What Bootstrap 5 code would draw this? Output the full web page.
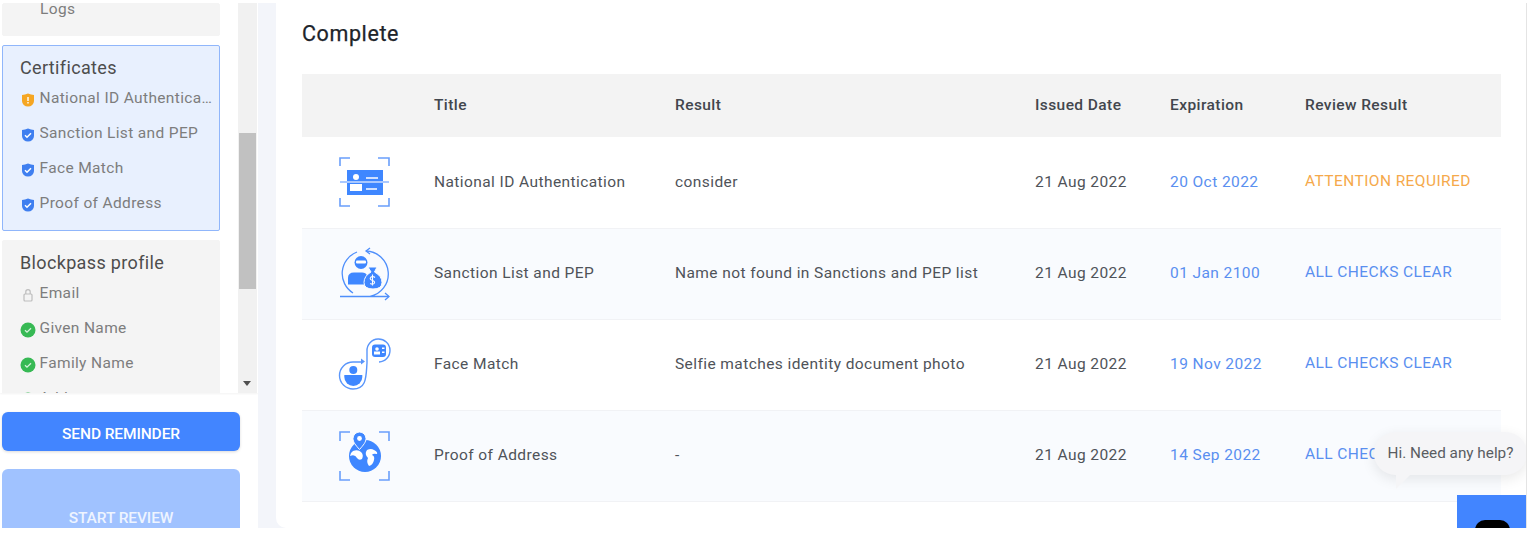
<!DOCTYPE html>
<html lang="en">
<head>
    <meta charset="UTF-8">
    <meta name="viewport" content="width=device-width, initial-scale=1.0">
    <title>Certificates</title>
    <link href="https://cdn.jsdelivr.net/npm/bootstrap@5.3.3/dist/css/bootstrap.min.css" rel="stylesheet">
    <style>
    body { background: #fff; font-family: Roboto, "Liberation Sans", sans-serif; overflow: hidden; height: 544px; }
    .page-wrap { height: 525px; margin-top: 3px; width: 1527px; overflow: hidden; position: relative; border-right: 1px solid #e4e4e4; }

    /* SIDEBAR */
    .side-col { width: 258px; flex: none; }
    .side-top { height: 390px; overflow: hidden; box-shadow: 0 1px 2px rgba(0,0,0,.05); }
    .side-panels { width: 218px; margin-left: 2px; flex: none; }
    .check-panel { background: #f4f4f4; border-radius: 2px; padding: 0 4px 0 17px; margin-bottom: 9px; border: 1px solid #f4f4f4; }
    .check-panel.active-panel { background: #e8f0fe; border-color: #90b6fb; padding-top: 8px; height: 186px; }
    .check-panel.panel-logs { height: 33px; padding-left: 37px; color: #7d7d7d; font-size: 15.5px; letter-spacing: .35px; line-height: 11px; }
    .panel-profile { padding-top: 8px; height: 170px; margin-bottom: 0; }
    .panel-name { font-size: 18px; color: #4d4d4d; letter-spacing: .35px; line-height: 28px; margin-bottom: 6px; }
    .check-row { height: 35px; font-size: 15.5px; color: #7d7d7d; letter-spacing: .35px; line-height: 20px; gap: 3.5px; white-space: nowrap; }
    .check-row span { overflow: hidden; text-overflow: ellipsis; }
    .check-row svg { flex: none; margin-top: 3.5px; }
    .fake-scroll { width: 19px; margin-left: 18px; background: #f1f1f1; position: relative; flex: none; }
    .fake-thumb { position: absolute; top: 130px; left: 1px; right: 1px; height: 156px; background: #c1c1c1; }
    .fake-arrow { position: absolute; left: 5px; bottom: 7px; border: 4px solid transparent; border-top: 5px solid #505050; border-bottom: 0; }
    .side-btn { display: block; width: 238px; margin-left: 2px; background: #4285ff; color: #fff; border: 0; border-radius: 6px; font-size: 15.5px; font-weight: 500; letter-spacing: -.1px; box-shadow: 0 1px 3px rgba(0,0,0,.15); }
    .btn-remind { height: 39px; margin-top: 19px; padding-top: 7px; }
    .btn-review { height: 70px; margin-top: 18px; background: #a0c2ff; color: #eef4ff; padding-top: 31px; box-shadow: none; }

    /* MAIN */
    .main-bg { background: #f3f5fa; padding-left: 18px; flex: 1; }
    .main-card { background: #fff; height: 100%; border-bottom-left-radius: 10px; padding: 17px 26px 0 26px; }
    .main-title { font-size: 21.5px; font-weight: 400; color: #20242a; letter-spacing: .6px; line-height: 28px; margin-bottom: 26px; -webkit-text-stroke: .25px #20242a; }
    .cert-table { table-layout: fixed; width: 1199px; margin: 0; }
    .cert-table th { background: #f3f3f3; height: 63px; font-size: 15.5px; font-weight: 500; color: #42464d; letter-spacing: .42px; vertical-align: middle; padding: 0; border: 0; }
    .cert-table td { height: 91px; font-size: 15.5px; color: #4f5359; letter-spacing: .42px; vertical-align: middle; padding: 0; border: 0; border-bottom: 1px solid #f1f2f5; background: #fff; }
    .cert-table tr.alt-row td { background: #f9fbfe; }
    .cert-table td.icon-cell { padding: 2px 0 0 34px; }
    .icon-cell svg { display: block; }
    .date-blue { color: #5a8ff0 !important; }
    .res-warn { color: #f5a94b !important; padding-bottom: 1px !important; }
    .res-ok { color: #5a8ff0 !important; padding-bottom: 1px !important; }

    /* CHAT */
    .chat-bubble { position: absolute; left: 1374px; top: 429px; width: 153px; height: 43px; background: #f5f5f7; border-radius: 22px; color: #5a5d62; font-size: 15.3px; line-height: 43px; text-align: center; box-shadow: 0 4px 14px rgba(0,0,0,.09); white-space: nowrap; }
    .chat-tail { position: absolute; left: 22px; top: 43px; border-style: solid; border-width: 14px 14px 0 0; border-color: #f5f5f7 transparent transparent transparent; }
    .chat-launcher { position: absolute; left: 1457px; top: 492px; width: 70px; height: 33px; background: #4285ff; overflow: hidden; }
    .chat-launcher i { display: block; width: 35px; height: 30px; background: #000; border-radius: 10px; margin: 25px 0 0 18px; }
    </style>
</head>
<body>
    <div class="page-wrap d-flex">
        <!-- SIDEBAR -->
        <div class="side-col">
            <div class="side-top d-flex">
                <div class="side-panels">
                    <div class="check-panel panel-logs">Logs</div>

                    <div class="check-panel active-panel">
                        <div class="panel-name">Certificates</div>
                        <div class="check-row d-flex">
                            <svg width="16" height="16" viewBox="0 0 16 16"><path d="M8 1.500C10 2.500 12 2.500 14 3V9A6 5.500 0 0 1 2 9V3C4 2.500 6 2.500 8 1.500z" fill="#f5a623"/><rect x="7.300" y="5" width="1.400" height="4" fill="#fff"/><rect x="7.300" y="10" width="1.400" height="1.500" fill="#fff"/></svg>
                            <span>National ID Authentication</span>
                        </div>
                        <div class="check-row d-flex">
                            <svg width="16" height="16" viewBox="0 0 16 16"><path d="M8 1.500C10 2.500 12 2.500 14 3V9A6 5.500 0 0 1 2 9V3C4 2.500 6 2.500 8 1.500z" fill="#3f7ff0"/><path d="M5 8.200l2 2 4-4" fill="none" stroke="#fff" stroke-width="1.500"/></svg>
                            <span>Sanction List and PEP</span>
                        </div>
                        <div class="check-row d-flex">
                            <svg width="16" height="16" viewBox="0 0 16 16"><path d="M8 1.500C10 2.500 12 2.500 14 3V9A6 5.500 0 0 1 2 9V3C4 2.500 6 2.500 8 1.500z" fill="#3f7ff0"/><path d="M5 8.200l2 2 4-4" fill="none" stroke="#fff" stroke-width="1.500"/></svg>
                            <span>Face Match</span>
                        </div>
                        <div class="check-row d-flex">
                            <svg width="16" height="16" viewBox="0 0 16 16"><path d="M8 1.500C10 2.500 12 2.500 14 3V9A6 5.500 0 0 1 2 9V3C4 2.500 6 2.500 8 1.500z" fill="#3f7ff0"/><path d="M5 8.200l2 2 4-4" fill="none" stroke="#fff" stroke-width="1.500"/></svg>
                            <span>Proof of Address</span>
                        </div>
                    </div>

                    <div class="check-panel panel-profile">
                        <div class="panel-name">Blockpass profile</div>
                        <div class="check-row d-flex">
                            <svg width="16" height="16" viewBox="0 0 16 16"><rect x="4" y="7" width="8" height="7" rx="1" fill="none" stroke="#bdbdbd" stroke-width="1.2"/><path d="M5.800 7V4.800a2.200 2.200 0 0 1 4.400 0V7" fill="none" stroke="#bdbdbd" stroke-width="1.2"/></svg>
                            <span>Email</span>
                        </div>
                        <div class="check-row d-flex">
                            <svg width="16" height="16" viewBox="0 0 16 16"><circle cx="8" cy="8" r="7.500" fill="#37b954"/><path d="M5 8.200l2 2 4-4" fill="none" stroke="#d5f2db" stroke-width="1.300"/></svg>
                            <span>Given Name</span>
                        </div>
                        <div class="check-row d-flex">
                            <svg width="16" height="16" viewBox="0 0 16 16"><circle cx="8" cy="8" r="7.500" fill="#37b954"/><path d="M5 8.200l2 2 4-4" fill="none" stroke="#d5f2db" stroke-width="1.300"/></svg>
                            <span>Family Name</span>
                        </div>
                        <div class="check-row d-flex">
                            <svg width="16" height="16" viewBox="0 0 16 16"><circle cx="8" cy="8" r="7.500" fill="#37b954"/></svg>
                            <span>Address</span>
                        </div>
                    </div>
                </div>
                <div class="fake-scroll">
                    <div class="fake-thumb"></div>
                    <div class="fake-arrow"></div>
                </div>
            </div>
            <button class="side-btn btn-remind" type="button">SEND REMINDER</button>
            <button class="side-btn btn-review" type="button">START REVIEW</button>
        </div>

        <!-- MAIN -->
        <div class="main-bg">
            <div class="main-card">
                <div class="main-title">Complete</div>
                <table class="table cert-table">
                    <colgroup>
                        <col style="width:132px"><col style="width:241px"><col style="width:360px"><col style="width:135px"><col style="width:135px"><col style="width:196px">
                    </colgroup>
                    <thead>
                        <tr><th></th><th>Title</th><th>Result</th><th>Issued Date</th><th>Expiration</th><th>Review Result</th></tr>
                    </thead>
                    <tbody>
                        <tr>
                            <td class="icon-cell">
                                <svg width="56" height="56" viewBox="0 0 56 56" fill="none">
                                    <path d="M4 11V3h10M42 3h11v8M4 43v8h10M42 51h11v-8" stroke="#6a9ffb" stroke-width="1.600"/>
                                    <rect x="11" y="15" width="36" height="25" fill="#3f87ff"/>
                                    <circle cx="20" cy="22" r="3" fill="#fff"/>
                                    <rect x="14" y="29" width="12" height="7" fill="#fff"/>
                                    <rect x="30" y="22" width="12" height="2" fill="#cfe0ff"/>
                                    <rect x="30" y="33" width="11" height="2" fill="#cfe0ff"/>
                                    <rect x="4" y="26" width="49" height="2" fill="#a9c8ff"/>
                                </svg>
                            </td>
                            <td>National ID Authentication</td><td>consider</td><td>21 Aug 2022</td><td class="date-blue">20 Oct 2022</td><td class="res-warn">ATTENTION REQUIRED</td>
                        </tr>
                        <tr class="alt-row">
                            <td class="icon-cell">
                                <svg width="56" height="56" viewBox="0 0 56 56" fill="none">
                                    <path d="M21 5A23 23 0 0 0 17 46" stroke="#4f8ffb" stroke-width="1.300"/>
                                    <path d="M30 4A23 23 0 0 1 34 49.500H4H53" stroke="#4f8ffb" stroke-width="1.300"/>
                                    <path d="M34 1l-4 3 4 3M49 46l4 3.500-4 3.500" stroke="#4f8ffb" stroke-width="1.300"/>
                                    <circle cx="25" cy="15.500" r="6.500" fill="#3f87ff"/>
                                    <rect x="20" y="13.500" width="10" height="3" rx="1" fill="#fff"/>
                                    <path d="M12 37.500V31q0-5.500 6-5.500h8q4 0 5 3l-2 9z" fill="#3f87ff"/>
                                    <path d="M32 20h9l-2.500 5q7.500 4 7.500 10.500 0 6.500-9 6.500-9 0-9-6.500 0-6.500 7-10.500z" fill="#3f87ff" stroke="#f9fbfe"/>
                                    <path d="M39 30.500q-2-1.800-4-.5-1.800 2 .5 3 3.500 1 3 3-1.500 2-4.300.5M36.500 27.500v11" stroke="#fff" stroke-width="1.100"/>
                                </svg>
                            </td>
                            <td>Sanction List and PEP</td><td>Name not found in Sanctions and PEP list</td><td>21 Aug 2022</td><td class="date-blue">01 Jan 2100</td><td class="res-ok">ALL CHECKS CLEAR</td>
                        </tr>
                        <tr>
                            <td class="icon-cell">
                                <svg width="56" height="56" viewBox="0 0 56 56" fill="none">
                                    <path d="M26 24H17a13.500 13.500 0 0 0 0 27C31 51 30 38 31 25V13A11.500 11.500 0 1 1 43 24" stroke="#5a96fb" stroke-width="1.400"/>
                                    <path d="M25 20.500l4 3-4 3z" fill="#5a96fb"/>
                                    <circle cx="17.300" cy="32" r="4" fill="#3f87ff"/>
                                    <path d="M8.300 37h18v2a9 9 0 0 1-18 0z" fill="#3f87ff"/>
                                    <rect x="36" y="6.500" width="14" height="12.500" rx="3" fill="#3f87ff"/>
                                    <circle cx="41" cy="11" r="1.800" fill="#fff"/>
                                    <rect x="38" y="13.500" width="6" height="3" fill="#fff"/>
                                    <rect x="46" y="9.500" width="2.500" height="1.500" fill="#fff"/>
                                    <rect x="46" y="13.500" width="2.500" height="1.500" fill="#fff"/>
                                </svg>
                            </td>
                            <td>Face Match</td><td>Selfie matches identity document photo</td><td>21 Aug 2022</td><td class="date-blue">19 Nov 2022</td><td class="res-ok">ALL CHECKS CLEAR</td>
                        </tr>
                        <tr class="alt-row">
                            <td class="icon-cell">
                                <svg width="56" height="56" viewBox="0 0 56 56" fill="none">
                                    <path d="M4 12V3h10M43 3h10v9M4 42v9h10M43 51h10v-9" stroke="#6a9ffb" stroke-width="1.600"/>
                                    <circle cx="29" cy="27" r="16" fill="#3f87ff"/>
                                    <path d="M17 22q5-2 8 1 3 3 1 7-3 2-5-1-2-4-7-2 0-3 3-5zM31 21q4-2 7 0 4 2 3 4-4-1-5 1 3 1 2 5-1 5-5 6-3-4-1-8-4-4-1-8z" fill="#fff"/>
                                    <path d="M23.500 20.500c-4-4.500-6.500-7.500-6.500-11a6.500 6.500 0 0 1 13 0c0 3.500-2.500 6.500-6.500 11z" fill="#3f87ff" stroke="#f9fbfe"/>
                                    <circle cx="23.500" cy="9.500" r="2.400" fill="#fff"/>
                                </svg>
                            </td>
                            <td>Proof of Address</td><td>-</td><td>21 Aug 2022</td><td class="date-blue">14 Sep 2022</td><td class="res-ok">ALL CHECKS CLEAR</td>
                        </tr>
                    </tbody>
                </table>
            </div>
        </div>

        <!-- CHAT WIDGET -->
        <div class="chat-bubble">Hi. Need any help?<div class="chat-tail"></div></div>
        <div class="chat-launcher"><i></i></div>
    </div>
    <script src="https://cdn.jsdelivr.net/npm/bootstrap@5.3.3/dist/js/bootstrap.bundle.min.js"></script>
</body>
</html>
